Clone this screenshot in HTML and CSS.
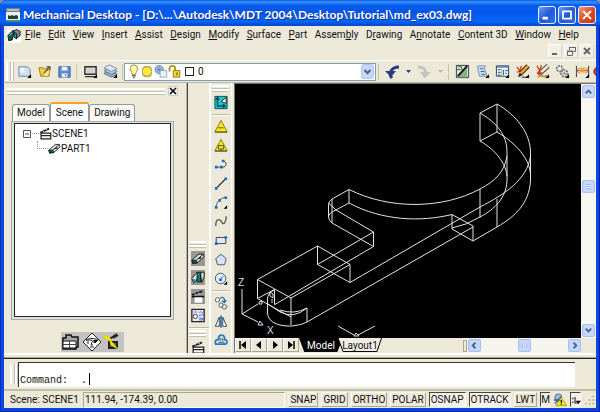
FILE: index.html
```html
<!DOCTYPE html>
<html lang="en">
<head>
<meta charset="utf-8">
<title>Mechanical Desktop</title>
<link rel="stylesheet" href="styles.css">
</head>
<body>
<svg class="defs" aria-hidden="true">
  <symbol id="more" viewBox="0 0 16 16"><path d="M15 11v4h-4z" fill="#000"/></symbol>
  <symbol id="clapper" viewBox="0 0 16 16"><path d="M1 6L12 1l1 2L2 8z" fill="#222"/><path d="M4 4l2 2M8 2l2 2" stroke="#fff"/><path d="M2.500 7.500h12v7h-12z" fill="#fff" stroke="#222" stroke-width="1.500"/><path d="M3 10.500h11" stroke="#222" stroke-width="1.500"/></symbol>
  <symbol id="part" viewBox="0 0 16 16"><path d="M1 10L9 3h5l1 3-8 7-5 1z" fill="#ddd" stroke="#111"/><path d="M1 10h5l1 3H2z" fill="#067" stroke="#111"/><path d="M6 10l8-7M8 8h3V6" stroke="#111" fill="none"/></symbol>
</svg>
<div class="window">
  <header class="title">
    <svg class="app-icon" viewBox="0 0 14 14"><path d="M0 0h14v14H0z" fill="#e9efec"/><path d="M0 0h14v4H0z" fill="#6f8482"/><path d="M1 2h12" stroke="#fff"/><path d="M2 7l2 1 2-1 2 1 2-1 2 1v3H2z" fill="#243c3c"/><path d="M0 13h14" stroke="#3a8c88" stroke-width="2"/></svg>
    <h1>Mechanical Desktop - [D:\...\Autodesk\MDT 2004\Desktop\Tutorial\md_ex03.dwg]</h1>
    <div class="caption">
      <button aria-label="Minimize"><svg viewBox="0 0 18 18"><path d="M4 12.500h6" stroke="#fff" stroke-width="3"/></svg></button>
      <button aria-label="Maximize"><svg viewBox="0 0 18 18"><path d="M4.500 5h9v8h-9zM4 5h10" stroke="#fff" stroke-width="2" fill="none"/></svg></button>
      <button class="close" aria-label="Close"><svg viewBox="0 0 18 18"><path d="M4.500 4.500l9 9M13.500 4.500l-9 9" stroke="#fff" stroke-width="2"/></svg></button>
    </div>
  </header>
  <div class="client">
    <nav class="menu">
      <svg class="doc-icon" viewBox="0 0 16 16"><path d="M0 0h16v16H0z" fill="#fff"/><path d="M1 8l6-6 1 2-2 9-4 1z" fill="#0a5557" stroke="#111"/><path d="M7 3l4-2 4 2v5l-4 3-2-1 2-4z" fill="#778786" stroke="#111"/><path d="M8 5l3 2v5l-3-2z" fill="#08aaa6" stroke="#111"/><path d="M3 8l3-3" stroke="#fff"/></svg>
      <ul>
        <li><a href="#"><u>F</u>ile</a></li><li><a href="#"><u>E</u>dit</a></li><li><a href="#"><u>V</u>iew</a></li><li><a href="#"><u>I</u>nsert</a></li><li><a href="#"><u>A</u>ssist</a></li><li><a href="#"><u>D</u>esign</a></li><li><a href="#"><u>M</u>odify</a></li><li><a href="#"><u>S</u>urface</a></li><li><a href="#"><u>P</u>art</a></li><li><a href="#">Assem<u>b</u>ly</a></li><li><a href="#">D<u>r</u>awing</a></li><li><a href="#">A<u>n</u>notate</a></li><li><a href="#"><u>C</u>ontent 3D</a></li><li><a href="#"><u>W</u>indow</a></li><li><a href="#"><u>H</u>elp</a></li>
      </ul>
    </nav>
    <div class="mdi">
      <button aria-label="Minimize drawing"><svg viewBox="0 0 12 12"><path d="M3 9h5" stroke="#666" stroke-width="2"/></svg></button>
      <button aria-label="Restore drawing"><svg viewBox="0 0 12 12"><path d="M4.500 5V2.500h6v4H8M4 2.500h7M2.500 6.500h5v4h-5zM2 6h6" stroke="#666" fill="none"/></svg></button>
      <button aria-label="Close drawing"><svg viewBox="0 0 12 12"><path d="M3 3l6 6M9 3l-6 6" stroke="#666" stroke-width="2"/></svg></button>
    </div>
    <div class="toolbar">
      <i class="vgrip"></i>
      <button aria-label="New"><svg viewBox="0 0 16 16"><path d="M2 3h9l3 3v7H2z" fill="#cfe0f5" stroke="#6080ad"/><path d="M3 4h5v5H3z" fill="#fff" opacity=".7"/><use href="#more"/></svg></button>
      <button aria-label="Open"><svg viewBox="0 0 16 16"><path d="M2 4h4l2 1h5v8H4z" fill="#f2cf45" stroke="#93811c"/><path d="M6 13l2-6h6l-2 6z" fill="#fff0a0" stroke="#b39a28"/><path d="M8 10l5-7M10 3h4v3" stroke="#222" fill="none"/></svg></button>
      <button aria-label="Save"><svg viewBox="0 0 16 16"><path d="M2 3h12v11H2z" fill="#5d8fd4" stroke="#355f9f"/><path d="M5 3h6v4H5zM5 10h6v4H5z" fill="#eef5ff"/><path d="M9 11v2" stroke="#355f9f"/></svg></button>
      <i class="vsep"></i>
      <button aria-label="Display"><svg viewBox="0 0 16 16"><path d="M2 3h12v8H2zM2 13.500h11" fill="#d3d4d0" stroke="#303030" stroke-width="1.500"/><use href="#more"/></svg></button>
      <button aria-label="Layers"><svg viewBox="0 0 16 16"><path d="M1 10l6-3 8 4-6 3z" fill="#9eb2cb" stroke="#4f6687"/><path d="M1 7l6-3 8 4-6 3z" fill="#b9cae0" stroke="#5c789d"/><path d="M1 4l6-3 8 4-6 3z" fill="#dfe9f5" stroke="#718cb0"/><use href="#more"/></svg></button>
      <i class="vsep"></i>
      <div class="layer">
        <svg class="layer-icons" viewBox="0 0 60 16"><path d="M8 1a4 4 0 0 0-4 4c0 2 2 3 2 6h4c0-3 2-4 2-6a4 4 0 0 0-4-4z" fill="#ffffa0" stroke="#90883a"/><path d="M6 12.500h4M7 14.500h2" stroke="#666" stroke-width="1.500"/><path d="M17 4l2-2h6l2 2v8l-2 2h-6l-2-2z" fill="#e8bd25"/><circle cx="22" cy="8" r="5" fill="#ffe83a" stroke="#8c9a9b"/><circle cx="35" cy="6" r="4.500" fill="#aac3dd" stroke="#718cac"/><path d="M31 6h8M35 2v8M32 3l6 6M38 3l-6 6" stroke="#6280a7" stroke-width=".7"/><path d="M36 7h7v7h-7z" fill="#edf2f9" stroke="#8ea9ca"/><path d="M46 8V5a3 3 0 0 1 6 0v5" fill="none" stroke="#b29a11" stroke-width="2"/><path d="M50 7h7v7h-7z" fill="#f3d62b" stroke="#8c7b1d"/><path d="M54 9v3" stroke="#333"/></svg>
        <i class="swatch"></i>
        <select aria-label="Layer"><option>0</option></select>
        <svg class="drop" viewBox="0 0 13 15"><rect x=".5" y=".5" width="12" height="14" rx="2" fill="#c4d6fc" stroke="#b1c7f5"/><path d="M3.500 6l3 3 3-3" fill="none" stroke="#4d6185" stroke-width="2"/></svg>
      </div>
      <i class="vsep"></i>
      <button class="wide" aria-label="Undo"><svg viewBox="0 0 30 15"><path d="M9 14C5 10 8 3 16 3" fill="none" stroke="#263b82" stroke-width="3"/><path d="M2 7h11l-5 6z" fill="#263b82"/><path d="M23 6h5l-2.500 3z" fill="#263b82"/></svg></button>
      <button class="wide" aria-label="Redo"><svg viewBox="0 0 30 15"><path d="M3 3c7 0 9 4 6 10" fill="none" stroke="#c1c3c2" stroke-width="3"/><path d="M5 8h11l-6 6z" fill="#c1c3c2"/><path d="M23 6h5l-2.500 3z" fill="#b6b7b2"/></svg></button>
      <i class="vsep"></i>
      <button class="tool" aria-label="Sketch"><svg viewBox="0 0 16 16"><path d="M1.500 1.500h13v13h-13z" fill="#e5ecdf" stroke="#334" /><path d="M2 14L13 2v12z" fill="#7eb87e"/><path d="M3 13L13 2" stroke="#111" stroke-width="2"/><path d="M3 3h4v3M2 6h4" stroke="#16643b" fill="none"/></svg></button>
      <button class="tool" aria-label="Script"><svg viewBox="0 0 16 16"><path d="M3 2h8l-1 3 3 8H5L3 6z" fill="#ccdced" stroke="#7890b0"/><path d="M5 5h4M6 8h4M7 11h4" stroke="#3d5c99"/><use href="#more"/></svg></button>
      <button class="tool" aria-label="Table"><svg viewBox="0 0 16 16"><path d="M1.500 2h13v11h-13z" fill="#fff" stroke="#26405f"/><path d="M2 3h12" stroke="#5682c6" stroke-width="2"/><path d="M3 6h3M3 9h3M3 12h3M9 6v6M11 7h3M11 10h2" stroke="#376fb8" stroke-width="1.500"/><path d="M7 5v7" stroke="#e2b427"/><use href="#more"/></svg></button>
      <button class="tool" aria-label="Edit feature"><svg viewBox="0 0 16 16"><path d="M2 3l3 4 2-5M2 9l4-2" stroke="#e04b20" fill="none" stroke-width="1.500"/><path d="M14 2L6 10" stroke="#302315" stroke-width="5"/><path d="M14 2L6 10" stroke="#f0a030" stroke-width="3"/><path d="M5 9l3 3-5 2z" fill="#222"/><path d="M7 14h8" stroke="#111"/><use href="#more"/></svg></button>
      <button class="tool" aria-label="Edit sketch"><svg viewBox="0 0 16 16"><path d="M2 2l3 5 2-6" stroke="#dc4a20" fill="none" stroke-width="1.500"/><path d="M14 2L5 10" stroke="#444" stroke-width="5"/><path d="M14 2L6 9" stroke="#ede8cc" stroke-width="3"/><path d="M6 8l-3 3" stroke="#e23a22" stroke-width="4"/><path d="M3 14c4-4 6 2 10-2" stroke="#d99020" stroke-width="2" fill="none"/><use href="#more"/></svg></button>
      <button class="tool" aria-label="Gears"><svg viewBox="0 0 16 16"><circle cx="5" cy="5" r="3" fill="#eee" stroke="#777" stroke-width="2" stroke-dasharray="2 1"/><circle cx="10" cy="10" r="3.500" fill="#dedfe1" stroke="#777" stroke-width="2" stroke-dasharray="2 1"/><circle cx="10" cy="10" r="1" fill="#555"/><use href="#more"/></svg></button>
      <button class="tool" aria-label="Dimension"><svg viewBox="0 0 16 16"><path d="M1.500 2v12M14.500 2v12" stroke="#333"/><path d="M2 7h12M5 4L2 7l3 3M11 4l3 3-3 3" stroke="#c45821" fill="none"/><path d="M6 4l4 5M10 4L6 9" stroke="#f0a22c" stroke-width="2"/><use href="#more"/></svg></button>
      <button class="partial" aria-label="Section"><svg viewBox="0 0 16 16"><circle cx="7" cy="8" r="5" fill="#cb3e24" stroke="#722"/></svg></button>
    </div>
    <main>
      <aside class="browser">
        <div class="panel-head"><i class="hgrip"></i><button aria-label="Close panel"><svg viewBox="0 0 10 10"><path d="M.500.500h9v9h-9z" fill="#f4f3e9" stroke="#ccc"/><path d="M2 2l6 6M8 2L2 8" stroke="#000" stroke-width="1.500"/></svg></button></div>
        <div class="tabs"><button>Model</button><button class="on">Scene</button><button>Drawing</button></div>
        <div class="tree-frame"><ul class="tree">
          <li><svg viewBox="0 0 10 14"><path d="M1.500 3.500h7v7h-7zM3 7h4" fill="#fff" stroke="#555"/></svg><i class="dots"></i><svg class="leaf" viewBox="0 0 16 16"><use href="#clapper"/></svg>SCENE1</li>
          <li class="child"><i class="elbow"></i><svg class="leaf" viewBox="0 0 16 16"><use href="#part"/></svg>PART1</li>
        </ul></div>
        <div class="filters">
          <button aria-label="Catalog"><svg viewBox="0 0 20 20"><path d="M2 6h3V3h5l1 2h6v10h-2v2H2z" fill="#aaa" stroke="#111" stroke-width="1.500"/><path d="M2 9h13v7H2z" fill="#fff" stroke="#111"/><path d="M2 12.500h13M8.500 9v7" stroke="#444"/></svg></button>
          <button aria-label="Visibility"><svg viewBox="0 0 20 20"><path d="M10 1l9 9-9 9-9-9z" fill="#fff" stroke="#222"/><path d="M4 8c4-2 8-2 12 0l-3 3-4-3zM6 9v3M10 10l-1 3h2M8 15h4" stroke="#222" fill="none"/><path d="M11 8h5l-3 3z" fill="#111"/></svg></button>
          <button aria-label="Update scene"><svg viewBox="0 0 20 20"><path d="M5 8l9-6M6 10h8v6H6zM10 6l5-3" stroke="#222" stroke-width="2" fill="#555"/><path d="M1 3l6 3 1 3 7 8-7-4-1-4-6-3z" fill="#ffef00" stroke="#d8ca00"/></svg></button>
        </div>
      </aside>
      <div class="dock dock-low">
        <i class="hgrip"></i>
        <button class="down" aria-label="Part modeling"><svg viewBox="0 0 16 16"><use href="#part"/></svg></button>
        <button class="down" aria-label="Assembly modeling"><svg viewBox="0 0 16 16"><path d="M1 9l6-7 2 2-3 8-3 2z" fill="#ddd" stroke="#111"/><path d="M7 2h4v11H7z" fill="#087f80" stroke="#111"/><path d="M11 2h4v5l-3 7z" fill="#ddd" stroke="#111"/><path d="M2 10h3v3H2z" fill="#0a898b"/></svg></button>
        <button class="down" aria-label="Scenes"><svg viewBox="0 0 16 16"><path d="M1 6l12-4M1 8h14" stroke="#111" stroke-width="2"/><path d="M4 4l2 3M8 3l2 3" stroke="#ccc"/><path d="M4 9h9v6H4z" fill="#fff"/></svg></button>
        <button aria-label="Drawing layout"><svg viewBox="0 0 16 16"><path d="M1 1h14v14H1z" fill="#eef" stroke="#222" stroke-width="1.500"/><circle cx="5" cy="9" r="2.500" fill="none" stroke="#333"/><path d="M3 4h4M9 5c3-3 3 1 5-1M9 8l5-1M9 11h4v2H9" stroke="#335acb" fill="none"/></svg></button>
        <i class="hsep"></i><i class="hgrip"></i>
        <button aria-label="Scene tools"><svg viewBox="0 0 16 16"><use href="#clapper"/></svg></button>
      </div>
      <div class="dock">
        <i class="hgrip"></i>
        <button aria-label="Power tools"><svg viewBox="0 0 16 16"><path d="M1 1h14v14H1z" fill="#17c9d0" stroke="#173c48"/><path d="M4 3v9h8M2 5l2-3 2 3M10 10l3 2-3 2" stroke="#034955" stroke-width="1.500" fill="none"/><path d="M8 7l6-5v7z" fill="#e4e9df" stroke="#222"/></svg></button>
        <i class="hsep"></i>
        <button aria-label="Profile"><svg viewBox="0 0 16 16"><path d="M8 1l7 13H1z" fill="#ffeb00" stroke="#766f17"/><path d="M5 9.500h6M1 14.500h14" stroke="#444"/></svg></button>
        <button aria-label="Sketch profile"><svg viewBox="0 0 16 16"><path d="M8 1l7 13H1z" fill="#ffeb00" stroke="#766f17"/><path d="M5 8h6v4H5zM8 12v2M1 14.500h14" fill="none" stroke="#444"/></svg></button>
        <button aria-label="Polyline"><svg viewBox="0 0 16 16"><path d="M2 11h8c5 0 5-7 0-7" stroke="#334" fill="none"/><path d="M1 9.500h3v3H1zM7 9.500h3v3H7zM9 2.500h3v3H9z" fill="#176ad1"/></svg></button>
        <button aria-label="Line"><svg viewBox="0 0 16 16"><path d="M3 13L13 3" stroke="#222" stroke-width="1.500"/><path d="M1 12h3v3H1zM12 1h3v3h-3z" fill="#176ad1"/></svg></button>
        <button aria-label="Arc"><svg viewBox="0 0 16 16"><path d="M2 14C3 7 7 3 14 2" stroke="#444" fill="none"/><path d="M1 12h3v3H1zM5 4h3v3H5zM12 1h3v3h-3z" fill="#176ad1"/><use href="#more"/></svg></button>
        <button aria-label="Spline"><svg viewBox="0 0 16 16"><path d="M2 13C2 2 8 6 9 9c2 4 5-1 5-7" stroke="#555" fill="none" stroke-width="1.500"/></svg></button>
        <button aria-label="Rectangle"><svg viewBox="0 0 16 16"><path d="M2.500 4.500h11v7h-11z" fill="#dce9f7" stroke="#333"/><path d="M1 10h3v3H1zM12 3h3v3h-3z" fill="#176ad1"/></svg></button>
        <button aria-label="Polygon"><svg viewBox="0 0 16 16"><path d="M8 2l6 5-2 7H4L2 7z" fill="#d5e3f5" stroke="#354a68"/></svg></button>
        <button aria-label="Circle"><svg viewBox="0 0 16 16"><circle cx="7.500" cy="8" r="6" fill="#e1edf9" stroke="#30455f"/><path d="M7 9l4-4" stroke="#235ba7"/><path d="M6 8h3v3H6z" fill="#176ad1"/><use href="#more"/></svg></button>
        <i class="hsep"></i>
        <button aria-label="Copy"><svg viewBox="0 0 16 16"><circle cx="4" cy="5" r="2.500" fill="#f5f8fc" stroke="#555"/><circle cx="8" cy="11" r="2.500" fill="#e2ebf5" stroke="#555"/><circle cx="12" cy="13" r="2.500" fill="#e2ebf5" stroke="#555"/><path d="M7 3c4-2 5 0 5 4M9 6l3 2 2-3" stroke="#2471b2" fill="none" stroke-width="1.500"/></svg></button>
        <button aria-label="Mirror"><svg viewBox="0 0 16 16"><path d="M1.500 13.500L6 3v10.500zM14.500 13.500L10 3v10.500z" fill="#fff" stroke="#333"/><path d="M8 1v14" stroke="#1874cf" stroke-width="2"/></svg></button>
        <button aria-label="Offset"><svg viewBox="0 0 16 16"><path d="M2 12c-2-5 2-5 3-5 0-7 8-7 7 0 4 0 3 5 1 5z" fill="#e1edf8" stroke="#2379bb" stroke-width="2"/><path d="M5 10h7M7 9V6h3v3" stroke="#355" fill="none"/></svg></button>
        <button aria-label="Array"><svg viewBox="0 0 16 16"><path d="M8 2v12M4 6l4-4 4 4" stroke="#247bbd" stroke-width="2" fill="none"/></svg></button>
      </div>
      <section class="drawing">
        <svg class="canvas" viewBox="235 85 346 254" preserveAspectRatio="xMinYMin meet" role="img" aria-label="Wireframe part">
          <g fill="none" stroke="#e4e4e4" stroke-width="1">
            <path d="M480 114l17-9v28l-17 9z"/>
            <path d="M497 105C516 116 531 134 530.500 155V182C529 204 516 217 497 228L473 242"/>
            <path d="M497 133C516 144 530 160 530.500 176"/>
            <path d="M530.500 157C527 181 505 195 480 208L350 283.500"/>
            <path d="M480 114C497 124 507 136 507 153V182C506 199 495 210 480 218Q467 226 452 229"/>
            <path d="M480 142C496 151 506 165 507 177"/>
            <path d="M507 157C504 174 495 182 480 190C443 210 390 211 349 190.500"/>
            <path d="M349 204C383 222 421 223 452 215.500"/>
            <path d="M480 190v28.500M497 200v28"/>
            <path d="M452 215.500L473 227V242L452 230z"/>
            <path d="M473 228L307 323"/>
            <path d="M349 204V190.500L332 200Q328.500 202 328.500 206V218Q329 222 332 224V200M328.500 204L336 211L349 204M336 211Q328.500 214 328.500 218"/>
            <path d="M336 211L373.500 233V247.500L332 224"/>
            <path d="M373.500 233L317.500 265.500V247L350 265.500V283.500L317.500 265.500"/>
            <path d="M317.500 247L257.500 280.500V299.500L291 318M257.500 280.500L291 299L350 265.500M373.500 247.500L274 306"/>
            <path d="M257.500 299.500L274.500 290.500V305M291 298V326"/>
            <path d="M274.500 291Q267.500 294 267.500 300V314C268 325 282 327.500 292 327Q302 326 307 323V309"/>
            <path d="M268 305L280 313Q294 320 307 309M280 311Q294 316 307 309M270 297v-4l3 2v4zM272 300v4"/>
            <path d="M242 290V315L258 305M242 315L258 323M259 303l3-1v3h-3zM258 326l2-4 3 4z"/>
            <path d="M338 327L354 336M358 336L375 327M354 337l2-3 3 3z"/>
          </g>
          <text x="238" y="287">Z</text><text x="267" y="335">X</text>
        </svg>
        <div class="vscroll">
          <button aria-label="Scroll up"><svg viewBox="0 0 12 12"><path d="M3 8l3-3 3 3"/></svg></button>
          <i class="thumb"></i>
          <button aria-label="Scroll down"><svg viewBox="0 0 12 12"><path d="M3 4l3 3 3-3"/></svg></button>
        </div>
        <div class="layouts">
          <div class="nav">
            <button aria-label="First"><svg viewBox="0 0 14 12"><path d="M4 2v8" stroke="#000" stroke-width="1.500"/><path d="M10 2v8L5 6z"/></svg></button><button aria-label="Previous"><svg viewBox="0 0 14 12"><path d="M9 2v8L4 6z"/></svg></button><button aria-label="Next"><svg viewBox="0 0 14 12"><path d="M5 2v8l5-4z"/></svg></button><button aria-label="Last"><svg viewBox="0 0 14 12"><path d="M10 2v8" stroke="#000" stroke-width="1.500"/><path d="M4 2v8l5-4z"/></svg></button>
          </div>
          <button class="sheet on">Model</button>
          <button class="sheet"><svg viewBox="0 0 44 14" preserveAspectRatio="none"><path d="M0 0l5 13.500h34L43.500 0" fill="#f0eee2" stroke="#000"/></svg><span>Layout1</span></button>
          <div class="hscroll">
            <i class="split"></i>
            <button aria-label="Scroll left"><svg viewBox="0 0 12 12"><path d="M7 3L4 6l3 3"/></svg></button>
            <i class="thumb"></i>
            <button aria-label="Scroll right"><svg viewBox="0 0 12 12"><path d="M5 3l3 3-3 3"/></svg></button>
          </div>
        </div>
      </section>
    </main>
    <div class="command"><i class="vgrip"></i><label for="cmd">Command:</label><input id="cmd" value="."><i class="caret"></i></div>
    <footer>
      <span class="scene">Scene: SCENE1</span>
      <output>111.94, -174.39, 0.00</output>
      <button>SNAP</button><button>GRID</button><button>ORTHO</button><button>POLAR</button><button class="on">OSNAP</button><button class="on">OTRACK</button><button>LWT</button><button class="on cut" aria-label="Model space">M</button>
      <svg class="tray" viewBox="0 0 16 16"><circle cx="6" cy="5" r="4" fill="#9cb7d6" stroke="#4a6c97"/><path d="M2 12l8-8M1 8h6" stroke="#375d94" stroke-width="1.500"/><path d="M9.500 5l6 9.500h-12z" fill="#ffe81a" stroke="#a99800"/><path d="M9.500 8v3M9.500 12v1.500" stroke="#111" stroke-width="1.500"/></svg>
      <button class="on menu-drop" aria-label="Status menu"><svg viewBox="0 0 12 14"><path d="M1 4v2M1 9v2M4 3v8h5" stroke="#222" fill="none" stroke-width="1.500"/><path d="M5 8h7l-3.500 4z"/></svg></button>
      <svg class="size" viewBox="0 0 12 12"><path d="M9 1h2v2H9zM5 5h2v2H5zM9 5h2v2H9zM1 9h2v2H1zM5 9h2v2H5zM9 9h2v2H9z" fill="#bdb9a5"/></svg>
    </footer>
  </div>
</div>
</body>
</html>
```
FILE: styles.css
```css
* { box-sizing: border-box; }
body { margin: 0; background: #8a93a5; color: #111; font: 10px/12px Roboto, "Liberation Sans", sans-serif; }
button, select, input { margin: 0; padding: 0; border: 0; background: none; color: inherit; font: inherit; }
ul { list-style: none; margin: 0; padding: 0; }
a { color: inherit; text-decoration: none; }
svg { display: block; flex: none; }
i { display: block; flex: none; }
.defs { position: absolute; width: 0; height: 0; }

.window { height: 100vh; display: flex; flex-direction: column; border-radius: 6px 6px 0 0; background: #0a46e0; padding: 0 4px 4px; overflow: hidden; box-shadow: inset 1px 0 #0a2fb4, inset -1px -1px #001fa0; }
.title { height: 26px; flex: none; display: flex; align-items: center; gap: 3px; margin: 0 -4px; padding: 3px 4px 0 6px; background: linear-gradient(#0a5be6 0, #3593ff 2px, #0a5eee 5px, #0355e8 12px, #0566fb 21px, #0246c8 26px); }
.app-icon { width: 14px; height: 14px; }
h1 { flex: 1; margin: 0; color: #fff; font: bold 12px/16px Lato, sans-serif; white-space: nowrap; text-shadow: 1px 1px #10308c; }
.caption { display: flex; gap: 2px; }
.caption button { width: 18px; height: 18px; border: 1px solid #e8f0ff; border-radius: 3px; background: linear-gradient(135deg, #6c9bf7, #2259d8 50%, #2f6ff0); }
.caption .close { background: linear-gradient(135deg, #f19b80, #de4a22 50%, #c93a16); }
.caption svg { width: 16px; height: 16px; }

.client { flex: 1; min-height: 0; display: flex; flex-direction: column; background: #ece9d8; }
.menu { height: 17px; flex: none; display: flex; align-items: center; gap: 4px; padding: 1px 17px 0 3px; }
.doc-icon { width: 14px; height: 15px; }
.menu ul { flex: 1; display: flex; justify-content: space-between; }
.menu u { text-underline-offset: 1px; }
.mdi { height: 18px; flex: none; display: flex; justify-content: flex-end; gap: 2px; padding: 1px 2px 2px; border-bottom: 1px solid #fff; }
.mdi button { width: 14px; height: 14px; border: 1px solid #fff; border-right-color: #dcd8c8; border-bottom-color: #dcd8c8; background: #f2f0e6; }
.mdi svg { width: 12px; height: 12px; }

.toolbar { height: 22px; flex: none; display: flex; align-items: center; padding: 0 0 0 2px; border-bottom: 1px solid #b9b5a2; overflow: hidden; }
.toolbar button { width: 20px; height: 18px; flex: none; display: grid; place-items: center; }
.toolbar button svg { width: 15px; height: 15px; }
.toolbar .wide { width: 32px; }
.toolbar .wide svg { width: 30px; height: 15px; }
.toolbar .partial { width: 4px; justify-items: start; overflow: hidden; }
.vgrip { width: 7px; height: 19px; border: solid #fff; border-width: 0 2px; box-shadow: 1px 0 #c3bfae, inset -1px 0 #c3bfae; }
.vsep { width: 1px; height: 16px; margin: 0 3px 0 2px; background: #c8c4b2; }
.toolbar > .vgrip { margin-right: 1px; }
.layer { flex: 1; height: 18px; display: flex; align-items: center; gap: 1px; margin-left: -2px; padding-right: 1px; border: 1px solid #7f9db9; background: #fff; }
.layer-icons { width: 59px; height: 15px; }
.swatch { width: 9px; height: 9px; border: 1px solid #222; }
.layer select { flex: 1; min-width: 0; height: 16px; padding-left: 3px; appearance: none; outline: 0; }
.drop { width: 13px; height: 15px; pointer-events: none; }

main { flex: 1; min-height: 0; display: flex; border-bottom: 2px solid #fff; }
.browser { width: 184px; flex: none; display: flex; flex-direction: column; padding: 3px 14px 1px 3px; border-right: 1px solid #444; box-shadow: inset -1px 0 #bbb7a6; }
.panel-head { display: flex; align-items: center; gap: 3px; margin-right: -5px; }
.panel-head .hgrip { flex: 1; margin: 0; }
.panel-head button, .panel-head svg { width: 10px; height: 10px; }
.hgrip { height: 6px; border: solid #fff; border-width: 2px 0; box-shadow: 0 1px #c3bfae, inset 0 -1px #c3bfae; }
.tabs { height: 25px; display: flex; align-items: flex-end; padding-left: 5px; }
.tabs button { height: 17px; padding: 0 4px; border: 1px solid #919b9c; border-bottom: 0; border-radius: 3px 3px 0 0; background: #fbfaf6; }
.tabs .on { height: 19px; padding: 0 5px; border-top: 2px solid #f6a21c; background: #fff; }
.tree-frame { flex: 1; margin: 0 -1px 0 4px; padding: 1px 2px 2px; border: 1px solid #a3acb0; background: #e1e0da; }
.tree { height: 100%; padding: 2px 0 0 7px; border: 1px solid #222; background: #fff; }
.tree li { height: 15px; display: flex; align-items: center; }
.tree li > svg:first-child { width: 10px; height: 14px; }
.dots { width: 7px; border-top: 1px dotted #999; }
.tree .leaf { width: 13px; height: 13px; }
.tree .child { padding-left: 15px; }
.elbow { width: 11px; height: 8px; margin-bottom: 8px; border: dotted #999; border-width: 0 0 1px 1px; }
.filters { align-self: flex-start; display: flex; margin: 12px 0 0 54px; background: #c2c2c2; }
.filters button { width: 21px; height: 20px; }
.filters svg { width: 20px; height: 20px; }

.dock { width: 22px; flex: none; display: flex; flex-direction: column; padding: 2px 2px 0 1px; border: solid #fff; border-width: 0 1px; overflow: hidden; }
.dock .hgrip { width: 17px; flex: none; margin-bottom: 2px; }
.dock button { width: 18px; height: 19px; flex: none; display: grid; place-items: center; }
.dock svg { width: 14px; height: 15px; }
.dock .down svg { background: #969696; }
.hsep { height: 1px; margin: 2px 0; background: #bbb7a5; box-shadow: 0 1px #fff; }
.dock-low { padding-top: 158px; padding-right: 0; border-left: 0; }

.drawing { flex: 1; min-width: 0; display: grid; grid-template: minmax(0, 1fr) 15px / minmax(0, 1fr) 15px; border: solid #77756a; border-width: 1px 0 0 1px; margin-left: 2px; }
.canvas { width: 100%; height: 100%; background: #000; }
.canvas text { fill: #ddd; font: 10px "Liberation Sans", sans-serif; }
.vscroll { display: flex; flex-direction: column; align-items: center; justify-content: space-between; padding: 1px; background: #f7f6f1; }
.vscroll button, .hscroll button { width: 13px; height: 13px; border: 1px solid #a6bff2; border-radius: 2px; background: #c5d7fd; }
.vscroll svg, .hscroll svg { width: 11px; height: 11px; fill: none; stroke: #4d6185; stroke-width: 2; }
.thumb { width: 13px; height: 13px; padding: 3px; border: 1px solid #a6bff2; border-radius: 2px; background-color: #c5d7fd; background-clip: content-box, border-box; }
.vscroll .thumb { background-image: repeating-linear-gradient(#eaf2ff 0 1px, #9db8ee 1px 2px), linear-gradient(#c5d7fd, #c5d7fd); margin-bottom: 49px; }
.hscroll .thumb { background-image: repeating-linear-gradient(90deg, #eaf2ff 0 1px, #9db8ee 1px 2px), linear-gradient(#c5d7fd, #c5d7fd); }
.layouts { grid-column: 1 / 3; display: flex; padding-right: 15px; }
.nav { display: flex; }
.nav button { width: 16px; height: 14px; border: 1px solid #fff; border-right-color: #aaa693; border-bottom-color: #aaa693; }
.nav svg { width: 14px; height: 12px; }
.sheet { position: relative; width: 44px; height: 14px; line-height: 13px; }
.sheet + .sheet { margin-left: -5px; }
.sheet.on { background: #000; color: #fff; clip-path: polygon(0 0, 100% 0, 87% 100%, 12% 100%); }
.sheet svg { position: absolute; inset: 0; width: 100%; height: 100%; }
.sheet span { position: relative; }
.hscroll { width: 118px; display: flex; align-items: center; justify-content: space-between; margin-left: auto; background: #f5f4ee; }
.split { width: 4px; height: 12px; margin-right: -36px; border: 1px solid #aaa693; background: #ece9d8; }

.command { position: relative; height: 31px; flex: none; display: flex; align-items: flex-end; margin-top: 3px; padding: 4px 21px 2px 6px; border-top: 1px solid #222; box-shadow: 0 -1px #aaa693; font: 10px/12px "Liberation Mono", monospace; }
.command .vgrip { height: 20px; margin: 0 1px 3px 0; }
.command label { height: 25px; padding: 12px 0 0 1px; border: solid #333; border-width: 1px 0 0 1px; background: #fff; }
.command input { width: 20px; flex: 1; height: 25px; padding: 11px 0 0 13px; border-top: 1px solid #333; background: #fff; outline: 0; }
.caret { position: absolute; left: 85px; bottom: 4px; width: 1px; height: 12px; background: #000; }

footer { height: 19px; flex: none; display: flex; align-items: center; gap: 3px; padding: 1px 1px 1px 6px; border-top: 2px solid #c2beab; white-space: nowrap; }
.scene { width: 70px; }
output { flex: 1; height: 16px; padding: 1px; line-height: 12px; border: 1px solid #aaa693; border-right-color: #fff; border-bottom-color: #fff; }
footer button { height: 15px; padding: 0 1px; border: 1px solid #fff; border-right-color: #aaa693; border-bottom-color: #aaa693; }
footer .on { border-color: #444 #fff #fff #444; background: #f4f2e8; }
footer .cut { padding: 0; border-right: 0; }
.tray { width: 14px; height: 14px; }
.menu-drop { width: 11px; }
.menu-drop svg { width: 9px; height: 12px; }
.size { width: 11px; height: 12px; }
```
